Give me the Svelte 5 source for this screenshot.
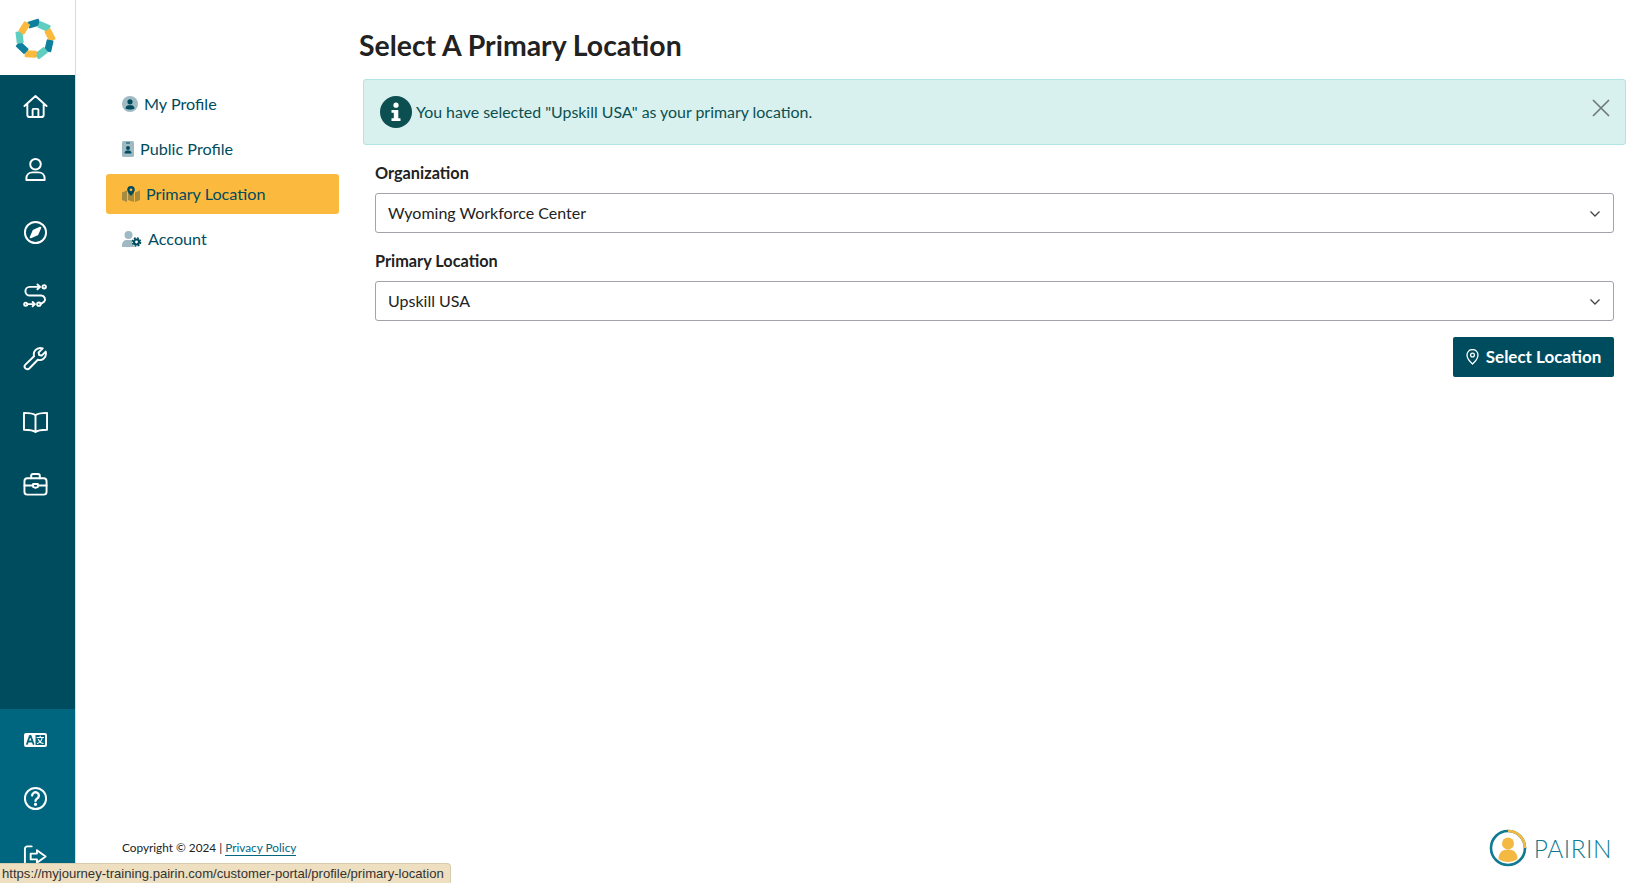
<script>
  const logoColors = ["#0f7f9e", "#5fcdc0", "#fbb93e"];
  const segments = Array.from({ length: 9 }, (_, i) => ({
    angle: i * 40 - 4,
    color: logoColors[i % 3],
  }));

  const subnav = [
    { id: "profile", label: "My Profile" },
    { id: "public", label: "Public Profile" },
    { id: "location", label: "Primary Location", active: true },
    { id: "account", label: "Account" },
  ];
</script>

<div class="page">
  <aside class="rail">
    <div class="logo">
      <svg width="44" height="44" viewBox="-22 -22 44 44">
        {#each segments as s}
          <rect x="-6" y="-3.500" width="12" height="7" rx="1" fill={s.color} transform="rotate({s.angle}) translate(0 -15.500) rotate(-13)" />
        {/each}
      </svg>
    </div>

    <nav class="rail-main">
      <a class="rail-btn" href="#home" aria-label="Home">
        <svg viewBox="0 0 26 26"><path d="M1.500 12.500 13 2l11.500 10.500M4.500 10v11.500a2.500 2.500 0 0 0 2.500 2.500h12a2.500 2.500 0 0 0 2.500-2.500V10M10 24v-7.500a1 1 0 0 1 1-1h4a1 1 0 0 1 1 1V24" /></svg>
      </a>
      <a class="rail-btn" href="#me" aria-label="Profile">
        <svg viewBox="0 0 26 26"><circle cx="13" cy="7.500" r="5.500" /><path d="M3.500 24v-1.500c0-4 3-6.500 6.500-6.500h6c3.500 0 6.500 2.500 6.500 6.500V24Z" /></svg>
      </a>
      <a class="rail-btn" href="#explore" aria-label="Explore">
        <svg viewBox="0 0 26 26"><circle cx="13" cy="13" r="11" /><path d="m18 8-3 7-7 3 3-7Z" fill="#fff" /></svg>
      </a>
      <a class="rail-btn" href="#paths" aria-label="Pathways">
        <svg viewBox="0 0 26 26"><circle cx="22" cy="4" r="1.800" /><circle cx="2.800" cy="22" r="1.600" /><circle cx="16.500" cy="22" r="1.800" /><path d="M17 4H7a4 4 0 0 0 0 9h12a4 4 0 0 1 3 6.500l-3 2M5 22h7" /><path d="m15 1.500 2.800 2.500L15 6.500M10 19.800l2.300 2.200-2.300 2.200" /></svg>
      </a>
      <a class="rail-btn" href="#tools" aria-label="Tools">
        <svg viewBox="0 0 26 26"><path d="M20.500 2.500 16.200 6.800l.6 2.600 2.600.6 4.200-4.200c.7 3-.1 5.800-2.200 7.500-1.800 1.400-4 1.700-6 1L6.500 23.400a2.800 2.800 0 0 1-4-.1 2.800 2.800 0 0 1 0-3.900l9-8.800c-.6-2.200-.2-4.600 1.400-6.300 1.900-2.100 5.100-2.700 7.600-1.800Z" /></svg>
      </a>
      <a class="rail-btn" href="#learn" aria-label="Learn">
        <svg viewBox="0 0 26 26"><path d="M13 6.500C11 4.500 8 4 1 4v17.500c7 0 10 .5 12 2.500 2-2 5-2.500 12-2.500V4c-7 0-10 .5-12 2.500ZM13 6.500V24" /></svg>
      </a>
      <a class="rail-btn" href="#jobs" aria-label="Jobs">
        <svg viewBox="0 0 26 26"><rect x="1.500" y="6.500" width="23" height="17" rx="3" /><path d="M8.500 6.500V4a2 2 0 0 1 2-2h5a2 2 0 0 1 2 2v2.500M1.500 14h9M15.500 14h9M10.500 12.500h5v3l-2.500 1-2.500-1Z" /></svg>
      </a>
    </nav>

    <div class="rail-bottom">
      <a class="rail-btn small" href="#lang" aria-label="Language">
        <svg viewBox="0 0 24 16" class="solid">
          <rect x="0.500" y="1" width="23" height="14" rx="2" fill="#fff" stroke="none" />
          <rect x="12" y="3" width="9.500" height="10" fill="#00667f" stroke="none" />
          <path d="M3.500 12 6.300 4h.9l2.800 8M4.700 9.500h4" stroke="#00667f" stroke-width="1.800" />
          <path d="M13.500 5.500h6.500M16.700 4v1.500M18.700 5.500c-.5 3-2.400 5-4.700 6M14.800 7.500c.8 2 2.800 3.500 4.800 4" stroke="#fff" stroke-width="1.100" />
        </svg>
      </a>
      <a class="rail-btn small" href="#help" aria-label="Help">
        <svg viewBox="0 0 26 26"><circle cx="13" cy="13" r="11" /><path d="M9.500 10a3.500 3.500 0 1 1 5.300 3c-1.200.7-1.800 1.300-1.800 2.600" stroke-width="2.400" /><circle cx="13" cy="19" r="0.700" fill="#fff" /></svg>
      </a>
      <a class="rail-btn small" href="#out" aria-label="Sign out">
        <svg viewBox="0 0 26 26"><path d="M9 2.500H4.500a2.500 2.500 0 0 0-2.500 2.500v16a2.500 2.500 0 0 0 2.500 2.500H9" /><path d="M14.500 6.500 23.500 13l-9 6.500v-3.500H8v-6h6.500Z" /></svg>
      </a>
    </div>
  </aside>

  <div class="side">
    <ul class="subnav">
      {#each subnav as item}
        <li class="subitem {item.id}" class:active={item.active}>
          {#if item.id === "profile"}
            <svg class="ico" width="16" height="16" viewBox="0 0 16 16">
              <circle cx="8" cy="8" r="8" fill="#a0bac3" />
              <circle cx="8" cy="5.800" r="2.600" fill="#004c5f" />
              <path d="M3.500 12.500c0-2 1.500-3.300 3-3.300h3c1.500 0 3 1.300 3 3.300-1.200.7-2.800 1-4.500 1s-3.300-.3-4.500-1Z" fill="#004c5f" />
            </svg>
          {:else if item.id === "public"}
            <svg class="ico" width="12" height="16" viewBox="0 0 12 16">
              <rect width="12" height="16" rx="1.500" fill="#a0bac3" />
              <rect x="4" y="1.500" width="4" height="1" fill="#004c5f" />
              <circle cx="6" cy="7" r="2" fill="#004c5f" />
              <path d="M2.500 12.500c0-2 1.200-3 2.500-3h2c1.300 0 2.500 1 2.500 3Z" fill="#004c5f" />
            </svg>
          {:else if item.id === "location"}
            <svg class="ico" width="18" height="16" viewBox="0 0 18 16">
              <path d="M0 6.500 5 4.500V16L0 14ZM6 4.500 12 6.500V16L6 14ZM13 6.500 18 4.500V14L13 16Z" fill="#a58a3f" />
              <path d="M9 0a3.800 3.800 0 0 0-3.800 3.800C5.200 6.300 9 10 9 10s3.800-3.700 3.800-6.200A3.800 3.800 0 0 0 9 0Z" fill="#004c5f" />
              <circle cx="9" cy="3.800" r="1.400" fill="#fbb93e" />
            </svg>
          {:else}
            <svg class="ico" width="20" height="16" viewBox="0 0 20 16">
              <circle cx="6.500" cy="4" r="4" fill="#a0bac3" />
              <path d="M0 16v-2c0-3 2-5 4.500-5h4c1.500 0 2.700.6 3.500 1.600V16Z" fill="#a0bac3" />
              <circle cx="14.500" cy="11" r="4.500" fill="#fff" />
              <circle cx="14.500" cy="11" r="2.500" fill="#fff" stroke="#004c5f" stroke-width="2.200" />
              <circle cx="14.500" cy="11" r="4.100" fill="none" stroke="#004c5f" stroke-width="1.400" stroke-dasharray="1.900 1.320" />
            </svg>
          {/if}
          <span>{item.label}</span>
        </li>
      {/each}
    </ul>

    <p class="copyright">Copyright © 2024 | <a href="#privacy">Privacy Policy</a></p>
  </div>

  <main class="content">
    <h1>Select A Primary Location</h1>

    <div class="alert">
      <span class="alert-icon">
        <svg width="14" height="20" viewBox="0 0 14 20">
          <circle cx="7" cy="3.200" r="2.600" fill="#fff" />
          <path d="M2.500 8h6.800v8.200h2.200V19H2.500v-2.800h2.300v-5.400H2.500Z" fill="#fff" />
        </svg>
      </span>
      <span class="alert-text">You have selected "Upskill USA" as your primary location.</span>
      <svg class="alert-close" width="18" height="18" viewBox="0 0 18 18">
        <path d="M1 1l16 16M17 1 1 17" stroke="#6f7a7a" stroke-width="1.700" fill="none" />
      </svg>
    </div>

    <form class="form">
      <label for="org">Organization</label>
      <div class="select">
        <select id="org">
          <option>Wyoming Workforce Center</option>
        </select>
        <svg width="10" height="6" viewBox="0 0 10 6"><path d="M.5.500 5 5 9.500.500" /></svg>
      </div>

      <label for="loc">Primary Location</label>
      <div class="select">
        <select id="loc">
          <option>Upskill USA</option>
        </select>
        <svg width="10" height="6" viewBox="0 0 10 6"><path d="M.5.500 5 5 9.500.500" /></svg>
      </div>

      <div class="actions">
        <button type="button" class="primary">
          <svg width="13" height="16" viewBox="0 0 13 16">
            <path d="M6.500 15S1 10 1 6a5.500 5.500 0 0 1 11 0c0 4-5.500 9-5.500 9Z" fill="none" stroke="#fff" stroke-width="1.300" />
            <circle cx="6.500" cy="6" r="1.900" fill="none" stroke="#fff" stroke-width="1.300" />
          </svg>
          <span>Select Location</span>
        </button>
      </div>
    </form>

    <div class="brand">
      <svg width="38" height="38" viewBox="0 0 38 38">
        <circle cx="19" cy="19" r="17" fill="none" stroke="#0f7a92" stroke-width="2.600" />
        <path d="M19 2a17 17 0 0 1 17 17" fill="none" stroke="#f4b942" stroke-width="2.600" />
        <circle cx="19" cy="14.500" r="6" fill="#f4b942" />
        <path d="M9.500 30c0-6.500 4-9.500 9.500-9.500s9.500 3 9.500 9.500c-2.500 2-6 3-9.500 3s-7-1-9.500-3Z" fill="#f4b942" />
      </svg>
      <span>PAIRIN</span>
    </div>
  </main>

  <div class="status">https://myjourney-training.pairin.com/customer-portal/profile/primary-location</div>
</div>

<style>
  :global(body) {
    margin: 0;
    background: #fff;
    font-family: Lato, "Noto Sans", sans-serif;
  }

  .page {
    height: 883px;
    overflow: hidden;
    display: flex;
    color: #222;
  }

  .rail {
    width: 75px;
    flex: none;
    display: flex;
    flex-direction: column;
    border-right: 1px solid #d5dde1;
  }

  .logo {
    height: 75px;
    flex: none;
    display: flex;
    align-items: center;
    justify-content: center;
    padding: 3px 5px 0 0;
    box-sizing: border-box;
  }

  .rail-main {
    flex: 1;
    background: #004c5f;
    display: flex;
    flex-direction: column;
  }

  .rail-bottom {
    background: #00667f;
    height: 174px;
    flex: none;
    display: flex;
    flex-direction: column;
    padding-top: 2px;
    box-sizing: border-box;
  }

  .rail-btn {
    height: 63px;
    flex: none;
    display: flex;
    align-items: center;
    justify-content: center;
    padding-right: 4px;
  }

  .rail-btn.small {
    height: 58px;
  }

  .rail-btn svg {
    width: 25px;
    height: 25px;
    fill: none;
    stroke: #fff;
    stroke-width: 2;
    stroke-linecap: round;
    stroke-linejoin: round;
  }

  .rail-btn svg.solid {
    height: 16px;
    stroke-width: 1.500;
  }

  .side {
    width: 286px;
    flex: none;
    display: flex;
    flex-direction: column;
    box-sizing: border-box;
    padding: 84px 0 26px 30px;
  }

  .subnav {
    list-style: none;
    margin: 0;
    padding: 0;
    width: 233px;
    display: flex;
    flex-direction: column;
    gap: 5px;
  }

  .subitem {
    height: 40px;
    display: flex;
    align-items: center;
    gap: 6px;
    padding-left: 16px;
    border-radius: 3px;
    font-size: 16.2px;
    color: #004c5f;
  }

  .subitem span {
    padding-bottom: 2px;
  }

  .subitem.account {
    gap: 6px;
  }

  .subitem.active {
    background: #fbb93e;
  }

  .ico {
    flex: none;
  }

  .copyright {
    margin: auto 0 0;
    padding-left: 16px;
    font-size: 11.8px;
    line-height: 18px;
    color: #222;
  }

  .copyright a {
    color: #00667f;
    text-decoration: none;
    border-bottom: 1px solid #00667f;
  }

  .content {
    flex: 1;
    min-width: 0;
    display: flex;
    flex-direction: column;
    padding-right: 24px;
    box-sizing: border-box;
  }

  h1 {
    margin: 26px 0 0 -3px;
    font-size: 28.4px;
    line-height: 38px;
    font-weight: 700;
    color: #222;
  }

  .alert {
    margin-top: 15px;
    margin-left: 1px;
    height: 66px;
    box-sizing: border-box;
    display: flex;
    align-items: center;
    padding: 0 14px 0 16px;
    background: #d8f1ee;
    border: 1px solid #aee5e0;
    border-radius: 3px;
    color: #0b4f50;
    font-size: 15.9px;
  }

  .alert-icon {
    width: 32px;
    height: 32px;
    flex: none;
    border-radius: 50%;
    background: #0b4f50;
    display: flex;
    align-items: center;
    justify-content: center;
    margin-right: 4px;
  }

  .alert-text {
    padding-bottom: 2px;
  }

  .alert-close {
    margin-left: auto;
    margin-right: 1px;
    margin-bottom: 8px;
  }

  .form {
    display: flex;
    flex-direction: column;
    margin: 18px 12px 0 13px;
  }

  label {
    font-size: 16.3px;
    font-weight: 700;
    line-height: 20px;
    color: #222;
    margin-bottom: 10px;
  }

  .select {
    position: relative;
    margin-bottom: 18px;
  }

  select {
    appearance: none;
    width: 100%;
    height: 40px;
    box-sizing: border-box;
    padding: 0 12px 2px;
    background: #fff;
    border: 1px solid #a3a3ab;
    border-radius: 3px;
    font-family: inherit;
    font-size: 16px;
    color: #222;
  }

  .select svg {
    position: absolute;
    right: 14px;
    top: 18px;
    fill: none;
    stroke: #444;
    stroke-width: 1.300;
  }

  .actions {
    display: flex;
    justify-content: flex-end;
    margin-top: -2px;
  }

  .primary {
    height: 40px;
    width: 161px;
    display: flex;
    align-items: center;
    justify-content: center;
    gap: 7px;
    background: #004c5f;
    border: none;
    border-radius: 2px;
    color: #fff;
    font-family: inherit;
    font-size: 17px;
    font-weight: 700;
  }

  .primary span {
    padding-bottom: 2px;
  }

  .brand {
    margin-top: auto;
    margin-bottom: 16px;
    display: flex;
    align-items: center;
    justify-content: flex-end;
    gap: 7px;
    padding-right: 14px;
  }

  .brand span {
    font-size: 24.5px;
    font-weight: 300;
    color: #0f7a92;
    letter-spacing: 0.5px;
  }

  .status {
    position: fixed;
    left: 0;
    bottom: 0;
    height: 20px;
    width: 451px;
    box-sizing: border-box;
    padding: 0 2px;
    background: #eddfc0;
    border: 1px solid #d8ccb0;
    border-left: none;
    border-bottom: none;
    border-top-right-radius: 4px;
    font-family: "Liberation Sans", sans-serif;
    font-size: 13.1px;
    line-height: 19px;
    color: #333;
    white-space: nowrap;
  }
</style>
